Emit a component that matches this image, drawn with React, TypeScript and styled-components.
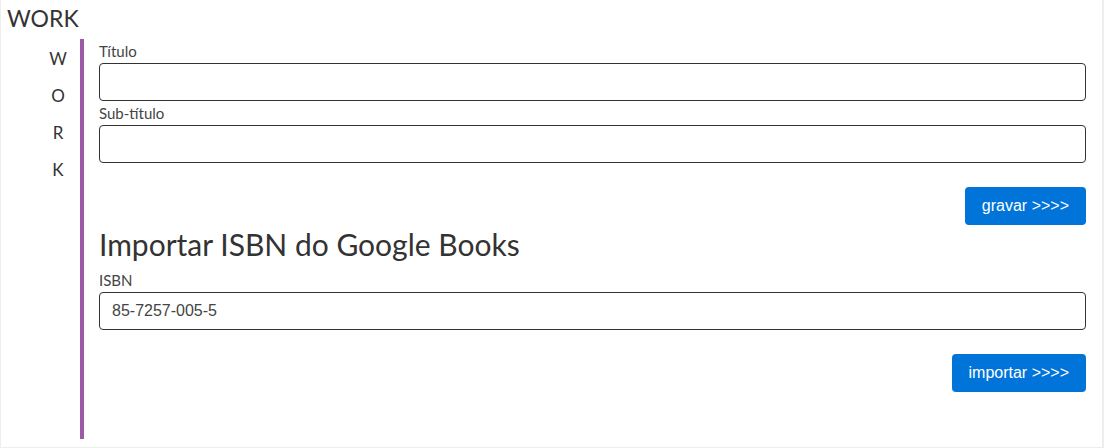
import React, { useState } from 'react';
import styled, { createGlobalStyle } from 'styled-components';

const GlobalStyle = createGlobalStyle`
  html, body {
    margin: 0;
    padding: 0;
    background: #fff;
  }
  body {
    font-family: 'Lato', 'Open Sans', sans-serif;
    color: #333;
  }
`;

const sideLetters = ['W', 'O', 'R', 'K'];

export default function App() {
  const [titulo, setTitulo] = useState('');
  const [subTitulo, setSubTitulo] = useState('');
  const [isbn, setIsbn] = useState('85-7257-005-5');

  return (
    <Page>
      <GlobalStyle />
      <PageTitle>WORK</PageTitle>
      <Body>
        <Side>
          { sideLetters.map((letter) => (
            <SideLetter key={ letter }>{ letter }</SideLetter>
          )) }
        </Side>
        <Content>
          <Label htmlFor="titulo">Título</Label>
          <Input
            id="titulo"
            value={ titulo }
            onChange={ (e) => setTitulo(e.target.value) }
          />
          <Label htmlFor="sub-titulo">Sub-título</Label>
          <Input
            id="sub-titulo"
            value={ subTitulo }
            onChange={ (e) => setSubTitulo(e.target.value) }
          />
          <ButtonRow>
            <Button type="button">gravar &gt;&gt;&gt;&gt;</Button>
          </ButtonRow>

          <SectionTitle>Importar ISBN do Google Books</SectionTitle>
          <Label htmlFor="isbn">ISBN</Label>
          <Input
            id="isbn"
            value={ isbn }
            onChange={ (e) => setIsbn(e.target.value) }
          />
          <ButtonRow>
            <Button type="button">importar &gt;&gt;&gt;&gt;</Button>
          </ButtonRow>
        </Content>
      </Body>
    </Page>
  );
}

const Page = styled.div`
  box-sizing: border-box;
  width: 1104px;
  height: 448px;
  border: 1px solid #eeeeee;
  border-width: 0 2px 1px 1px;
`;

const PageTitle = styled.h1`
  margin: 0;
  padding-left: 6px;
  height: 39px;
  line-height: 36px;
  font-size: 23px;
  font-weight: 400;
  color: #333;
`;

const Body = styled.div`
  display: flex;
  height: 400px;
`;

const Side = styled.div`
  display: flex;
  flex-direction: column;
  align-items: center;
  width: 36px;
  margin-left: 39px;
  margin-right: 4px;
  padding-top: 10px;
`;

const SideLetter = styled.span`
  height: 37px;
  line-height: 20px;
  font-size: 17px;
  color: #333;
`;

const Content = styled.div`
  flex: 1;
  display: flex;
  flex-direction: column;
  border-left: 4px solid #9b59a6;
  padding: 0 16px 0 15px;
`;

const Label = styled.label`
  display: block;
  height: 24px;
  line-height: 24px;
  font-size: 15px;
  color: #444;
`;

const Input = styled.input`
  box-sizing: border-box;
  width: 100%;
  height: 38px;
  margin: 0;
  padding: 0 12px;
  border: 1px solid #333;
  border-radius: 4px;
  font-family: 'Liberation Sans', Arial, sans-serif;
  font-size: 16px;
  color: #444;
  background: #fff;
  outline: none;
`;

const ButtonRow = styled.div`
  display: flex;
  justify-content: flex-end;
  margin-top: 24px;
`;

const Button = styled.button`
  height: 38px;
  padding: 0 17px;
  border: none;
  border-radius: 4px;
  background: #0074d9;
  color: #fff;
  font-family: 'Liberation Sans', Arial, sans-serif;
  font-size: 16px;
  cursor: pointer;
`;

const SectionTitle = styled.h2`
  margin: 0;
  height: 43px;
  line-height: 38px;
  font-size: 30px;
  font-weight: 400;
  color: #333;
`;
